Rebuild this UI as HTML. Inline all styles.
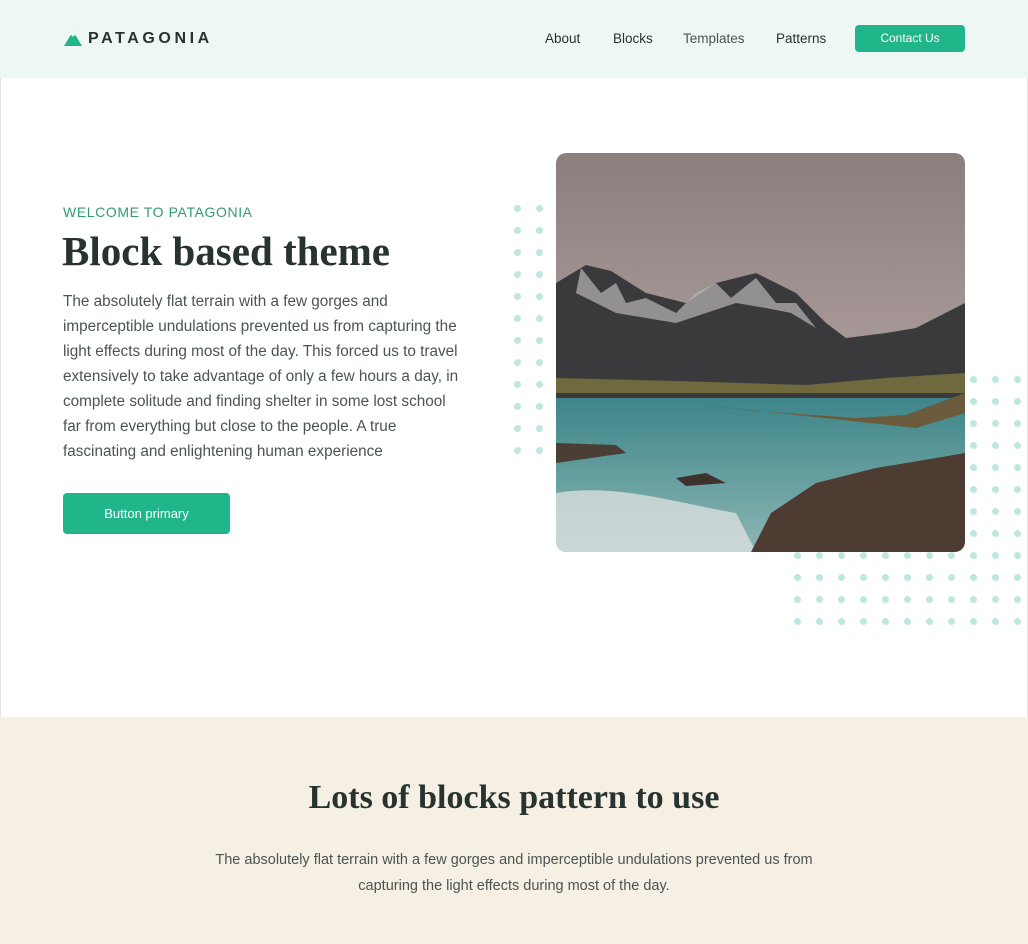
<!DOCTYPE html>
<html><head><style>
*{margin:0;padding:0;box-sizing:border-box}
body{width:1028px;height:944px;overflow:hidden;font-family:"Liberation Sans",sans-serif;background:#fff;position:relative;color:#2a3a37}
.hdr{position:absolute;left:0;top:0;width:1028px;height:78px;background:#eff7f4}
.logo{position:absolute;left:64px;top:30px;font-weight:bold;font-size:16px;letter-spacing:3.6px;color:#26332f}
.logo span{margin-left:24px}
.nav{position:absolute;top:31px;font-size:13.5px;color:#26332f}
.btn{position:absolute;background:#21b58a;color:#fff;border-radius:4px;text-align:center}
.serif{font-family:"Liberation Serif",serif;color:#26332f;font-weight:bold}
.dot{position:absolute;width:7px;height:7px;border-radius:50%;background:#bfe7df}
p.body{position:absolute;font-size:14.5px;line-height:25px;color:#4a5552;white-space:nowrap}
</style></head><body>
<div style="position:absolute;left:0;top:0;width:1px;height:944px;background:#e3e3e3"></div>
<div style="position:absolute;right:0;top:0;width:1px;height:944px;background:#e3e3e3"></div>
<div class="hdr">
<svg style="position:absolute;left:64px;top:31px" width="18" height="15" viewBox="0 0 18 15"><path d="M9 0L18 15H0Z" fill="#21b58a"/><path d="M9 0L12 5L10 4L9 6L7.5 4L6 5Z" fill="#fff"/></svg>
<div class="logo"><span>PATAGONIA</span></div>
<div class="nav" style="left:545px">About</div>
<div class="nav" style="left:613px">Blocks</div>
<div class="nav" style="left:683px;color:#4a5552">Templates</div>
<div class="nav" style="left:776px">Patterns</div>
<div class="btn" style="left:855px;top:25px;width:110px;height:27px;line-height:27px;font-size:12px">Contact Us</div>
</div>
<div style="position:absolute;left:63px;top:204px;font-size:14px;letter-spacing:.6px;color:#2f9c74">WELCOME TO PATAGONIA</div>
<div class="serif" style="position:absolute;left:62px;top:227px;font-size:41px">Block based theme</div>
<p class="body" style="left:63px;top:289px;font-size:15.3px">The absolutely flat terrain with a few gorges and<br>imperceptible undulations prevented us from capturing the<br>light effects during most of the day. This forced us to travel<br>extensively to take advantage of only a few hours a day, in<br>complete solitude and finding shelter in some lost school<br>far from everything but close to the people. A true<br>fascinating and enlightening human experience</p>
<div class="btn" style="left:63px;top:493px;width:167px;height:41px;line-height:41px;font-size:13px">Button primary</div>
<div id="dots"></div>
<svg style="position:absolute;left:556px;top:153px;border-radius:10px" width="409" height="399" viewBox="0 0 409 399">
<defs><linearGradient id="sky" x1="0" y1="0" x2="0" y2="1"><stop offset="0" stop-color="#8a7f7d"/><stop offset="1" stop-color="#c7b4b4"/></linearGradient>
<linearGradient id="w" x1="0" y1="0" x2="0" y2="1"><stop offset="0" stop-color="#3d8589"/><stop offset="1" stop-color="#8fb8b5"/></linearGradient>
<clipPath id="c"><rect width="409" height="399" rx="10"/></clipPath></defs>
<g clip-path="url(#c)">
<rect width="409" height="399" fill="url(#sky)"/>
<path d="M0 130L30 112L55 118L90 140L130 150L160 130L200 120L240 140L270 170L290 185L330 180L360 175L409 150V250H0Z" fill="#3a3a3c"/>
<path d="M25 115L45 140L60 130L70 150L90 145L120 160L140 140L160 130L175 145L200 125L220 150L240 150L260 175L235 160L210 155L180 150L150 160L120 170L90 165L60 160L40 150L20 140Z" fill="#b9b5b8" opacity=".7"/>
<path d="M0 225L120 228L250 232L330 225L409 220V240H0Z" fill="#6e6a3e"/>
<rect y="245" width="409" height="160" fill="url(#w)"/>
<path d="M0 290L60 292L70 300L0 310Z" fill="#4a3e36"/>
<path d="M130 250L200 258L300 265L350 262L409 240V260L360 275Z" fill="#6b5a3c"/>
<path d="M0 340C60 330 120 350 180 360L200 399H0Z" fill="#d9dedd" opacity=".8"/>
<path d="M195 399L215 360L260 330L320 315L380 305L409 300V399Z" fill="#4e3c33"/>
<path d="M120 325L150 320L170 330L130 333Z" fill="#3e322c"/>
</g></svg>
<div style="position:absolute;left:0;top:717px;width:1028px;height:227px;background:#f5efe4"></div>
<div class="serif" style="position:absolute;left:0;top:779px;width:1028px;text-align:center;font-size:34px">Lots of blocks pattern to use</div>
<p class="body" style="left:0;top:847px;width:1028px;text-align:center;line-height:26px">The absolutely flat terrain with a few gorges and imperceptible undulations prevented us from<br>capturing the light effects during most of the day.</p>
<script>
var h='';function d(x,y){h+='<div class="dot" style="left:'+(x-3.5)+'px;top:'+(y-3.5)+'px"></div>';}
for(var r=0;r<12;r++){d(517,208+22*r);d(539,208+22*r);}
for(var r=0;r<8;r++)for(var c=0;c<3;c++)d(973+22*c,379+22*r);
for(var r=0;r<4;r++)for(var c=0;c<11;c++)d(797+22*c,555+22*r);
document.getElementById('dots').innerHTML=h;
</script>
</body></html>
